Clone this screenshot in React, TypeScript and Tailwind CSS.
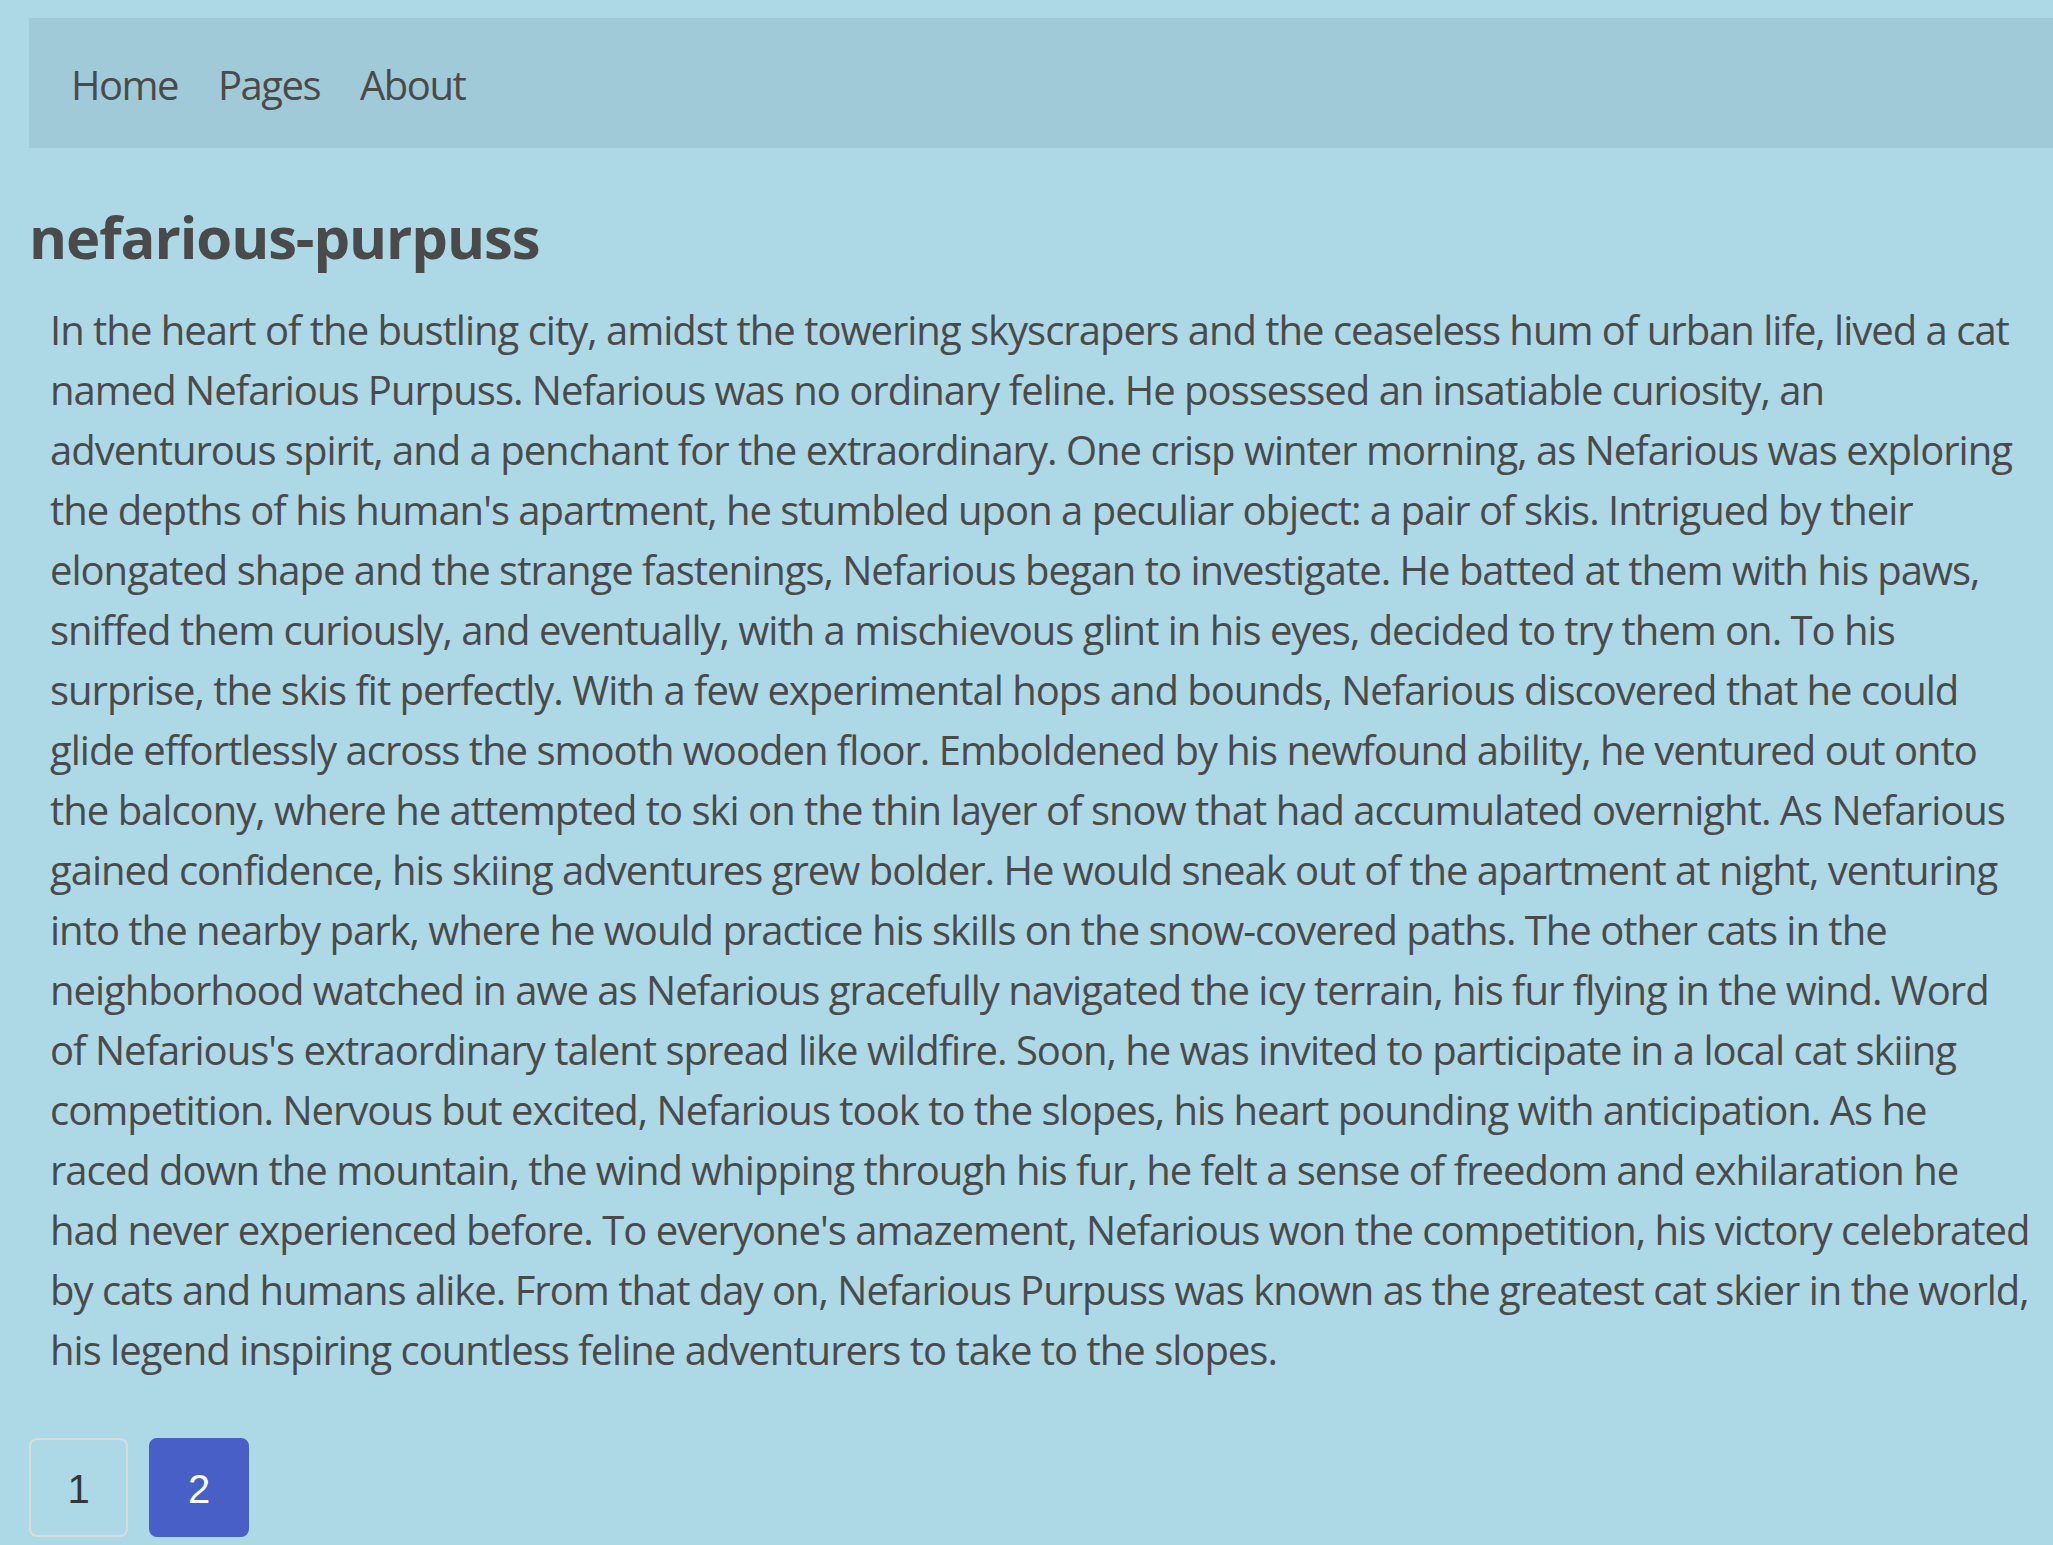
import React from "react";

const lines = [
  "In the heart of the bustling city, amidst the towering skyscrapers and the ceaseless hum of urban life, lived a cat",
  "named Nefarious Purpuss. Nefarious was no ordinary feline. He possessed an insatiable curiosity, an",
  "adventurous spirit, and a penchant for the extraordinary. One crisp winter morning, as Nefarious was exploring",
  "the depths of his human's apartment, he stumbled upon a peculiar object: a pair of skis. Intrigued by their",
  "elongated shape and the strange fastenings, Nefarious began to investigate. He batted at them with his paws,",
  "sniffed them curiously, and eventually, with a mischievous glint in his eyes, decided to try them on. To his",
  "surprise, the skis fit perfectly. With a few experimental hops and bounds, Nefarious discovered that he could",
  "glide effortlessly across the smooth wooden floor. Emboldened by his newfound ability, he ventured out onto",
  "the balcony, where he attempted to ski on the thin layer of snow that had accumulated overnight. As Nefarious",
  "gained confidence, his skiing adventures grew bolder. He would sneak out of the apartment at night, venturing",
  "into the nearby park, where he would practice his skills on the snow-covered paths. The other cats in the",
  "neighborhood watched in awe as Nefarious gracefully navigated the icy terrain, his fur flying in the wind. Word",
  "of Nefarious's extraordinary talent spread like wildfire. Soon, he was invited to participate in a local cat skiing",
  "competition. Nervous but excited, Nefarious took to the slopes, his heart pounding with anticipation. As he",
  "raced down the mountain, the wind whipping through his fur, he felt a sense of freedom and exhilaration he",
  "had never experienced before. To everyone's amazement, Nefarious won the competition, his victory celebrated",
  "by cats and humans alike. From that day on, Nefarious Purpuss was known as the greatest cat skier in the world,",
  "his legend inspiring countless feline adventurers to take to the slopes.",
];

export default function App() {
  return (
    <div className="min-h-screen bg-[#add8e6] pl-[29px] pt-[18px] font-['Open_Sans',sans-serif] text-[#4a4a4a]">
      <nav className="flex h-[130px] items-center bg-[#a1cad9] pl-[22px]">
        {["Home", "Pages", "About"].map((t) => (
          <a key={t} className="px-[20px] pt-[4px] text-[40px] leading-[60px] tracking-[-1.5px] text-[#4a4a4a]">
            {t}
          </a>
        ))}
      </nav>
      <h1 className="mt-[55px] text-[58px] font-bold leading-[67.5px] tracking-[-1.1px] text-[#4a4a4a]">
        nefarious-purpuss
      </h1>
      <p className="mt-[29px] px-[21px] text-[40px] leading-[60px] tracking-[-1px]">
        {lines.map((l, i) => (
          <span key={i} className="block whitespace-nowrap">
            {l}
          </span>
        ))}
      </p>
      <div className="mt-[58px] flex gap-[21px] pb-[8px] font-['Liberation_Sans',sans-serif]">
        <button className="flex h-[99px] w-[99px] items-center justify-center rounded-[8px] border-2 border-[#dbdbdb] pt-[4px] text-[40px] text-[#363636]">
          1
        </button>
        <button className="flex h-[99px] w-[100px] items-center justify-center rounded-[8px] border-2 border-[#485fc7] bg-[#485fc7] pt-[4px] text-[40px] text-white">
          2
        </button>
      </div>
    </div>
  );
}
